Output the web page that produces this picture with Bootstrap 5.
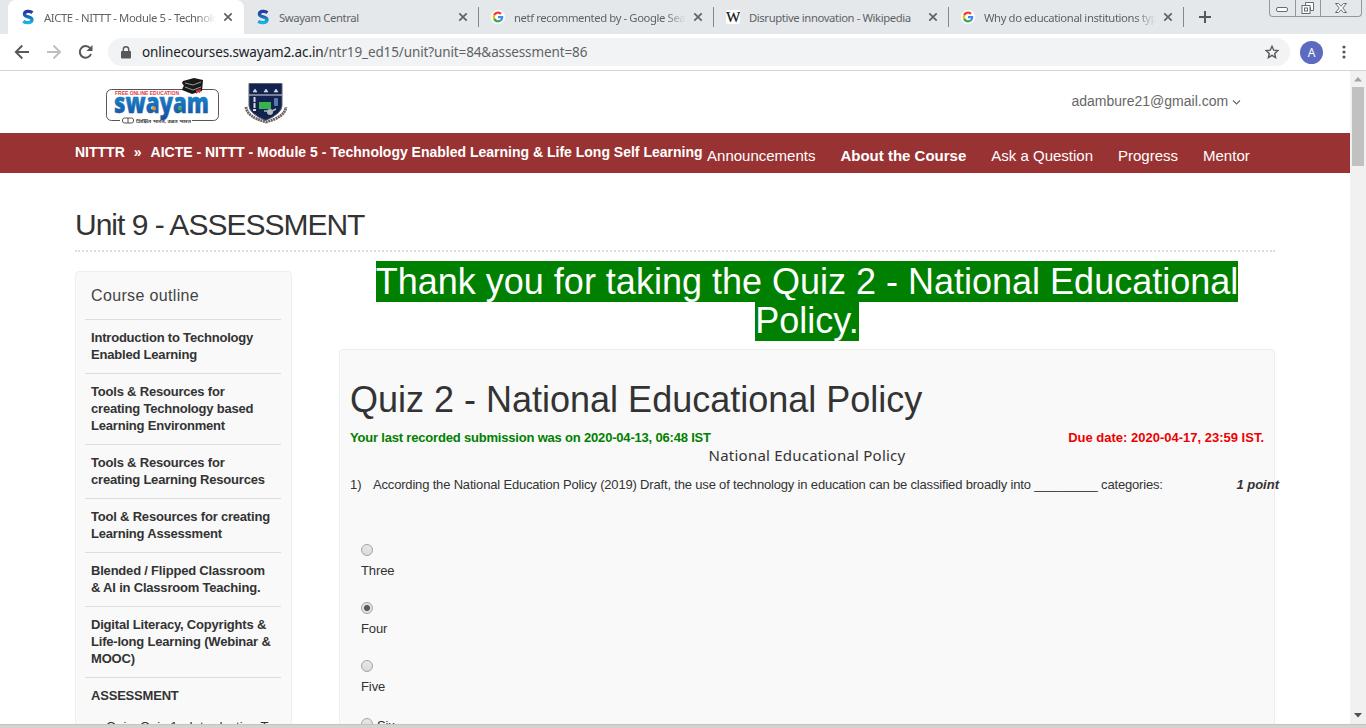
<!DOCTYPE html>
<html lang="en">
<head>
<meta charset="utf-8">
<meta name="viewport" content="width=device-width, initial-scale=1">
<title>AICTE - NITTT - Module 5</title>
<link rel="stylesheet" href="https://cdn.jsdelivr.net/npm/bootstrap@5.3.0/dist/css/bootstrap.min.css">
<style>
body{width:1366px;height:728px;font-family:"Liberation Sans",Arial,sans-serif;font-size:13px;line-height:17px;color:#333}
.chrome{font-family:"Noto Sans",Tahoma,sans-serif;color:#5f6368}
.tabstrip{height:34px;background:#e5e8eb;padding-left:8px}
.tab{width:235px;height:34px;padding:0 11px 0 12px;font-size:11.3px;letter-spacing:-.4px}
.tab.active-tab{width:236px;padding-left:13px;padding-right:11px;background:#fff;border-radius:8px 8px 0 0}
.tab .divider{width:1px;height:20px;background:#85888b;margin-left:10px;margin-right:-11px}
.tab-title{width:172px;margin-left:9px;overflow:hidden;white-space:nowrap}
.fade-end{-webkit-mask-image:linear-gradient(90deg,#000 88%,transparent)}
.favicon{width:14px;height:16px;flex:none}
.wctl{height:17px;width:93px;margin-left:57px;border:1px solid #94979b;border-top:0;border-radius:0 0 4px 4px}
.wctl>span+span{border-left:1px solid #94979b}
.toolbar{height:36px}
.omnibox{height:28px;width:1182px;border-radius:14px;background:#f1f3f4;font-size:13.5px;letter-spacing:-.12px;margin-left:14px}
.avatar{width:23px;height:23px;background:#5c6bc0;font-size:12px}
.view{height:654px;border-top:1px solid #d4d6d8}
.page{width:1350px}
.scroller{width:16px;background:#f1f1f1}
.thumb{width:12px;height:79px;background:#c1c1c1}
.brandbar{height:62px;padding:7px 109px 0 105px}
.mail{font-size:14px;color:#666}
.coursebar{height:40px;background:#993333;padding-left:75px;color:#fff}
.crumbs{font-size:14px;font-weight:700;line-height:38px;white-space:nowrap}
.menu{font-size:15px;line-height:45px;white-space:nowrap}
.unit{font-size:30px;line-height:40px;letter-spacing:-1px;margin:0 75px;padding-top:32px;height:79px;border-bottom:2px dotted #ddd;font-weight:400}
.body-row{padding:19px 75px 0;}
.panel{background:#f9f9f9;border:1px solid #eee;border-radius:4px}
.outline{width:217px;height:600px;padding:0 10px 0 9px}
.outline .head{font-size:16px;letter-spacing:.35px;height:47px;padding:14px 0 0 6px;line-height:20px;color:#444}
.outline .unit-item{border-top:1px solid #ddd;padding:9px 6px 10px;font-weight:700;white-space:nowrap;letter-spacing:-.2px}
.quiz-col{width:936px;margin-left:47px;margin-top:-9px}
.thanks{font-size:36px;line-height:39px;color:#fff;font-weight:400;margin:0 0 9px;white-space:nowrap}
.thanks span{background:#008000}
.quiz{height:600px;padding:30px 10px 0}
.quiz h1{font-size:36px;line-height:40px;font-weight:400;margin:0 0 9px}
.submitted{letter-spacing:-.19px}
.question{letter-spacing:-.175px;white-space:nowrap}
.topic{font-family:"Noto Sans",sans-serif;font-size:15px;line-height:18px;letter-spacing:.23px}
.opt{padding-left:11px;height:58px;letter-spacing:-.1px}
.dot{width:12px;height:12px;border:1px solid #a5a5a5;border-radius:50%;background:linear-gradient(#e8e8e8,#dadada);display:block;margin-bottom:6px}
.dot.on{background:radial-gradient(circle,#5a5a5a 0 2.7px,#e2e2e2 3.3px)}
.frame-end{height:4px;background:#d6d3ce;border-top:1px solid #c4c4c4}
</style>
</head>
<body class="overflow-hidden bg-white">
<svg width="0" height="0" class="position-absolute">
<defs>
<linearGradient id="sg" x1="0" y1="0" x2="0" y2="1"><stop offset="0" stop-color="#2638a0"/><stop offset=".5" stop-color="#1770bd"/><stop offset="1" stop-color="#15b4e4"/></linearGradient>
<linearGradient id="wg" x1="0" y1="0" x2="0" y2="1"><stop offset="0" stop-color="#1ba0e0"/><stop offset="1" stop-color="#174a9c"/></linearGradient>
<symbol id="fs" viewBox="0 0 14 16"><path d="M11.5 3.6C8.500 1.500 3.400 2 3.400 5.200c0 3.300 7.600 1.900 7.600 5.500 0 3.400-5.500 3.800-8.800 1.600" fill="none" stroke="url(#sg)" stroke-width="3.300"/></symbol>
<symbol id="fg" viewBox="0 0 48 48"><circle cx="24" cy="24" r="24" fill="#fff"/><path fill="#EA4335" d="M24 13c2.900 0 5.400 1 7.400 2.900l5.500-5.500C33.500 7.300 29.100 5.500 24 5.500c-7.300 0-13.500 4.100-16.500 10.200l6.500 5C15.500 16.200 19.400 13 24 13z"/><path fill="#4285F4" d="M42 24.400c0-1.300-.1-2.600-.3-3.900H24V28h10.100c-.4 2.300-1.800 4.300-3.800 5.600l6.200 4.800c3.500-3.300 5.500-8.200 5.500-14z"/><path fill="#FBBC05" d="M14 27.300a11 11 0 0 1 0-6.600l-6.500-5a18.500 18.500 0 0 0 0 16.600z"/><path fill="#34A853" d="M24 42.500c5 0 9.200-1.600 12.400-4.500l-6.100-4.700A11.600 11.600 0 0 1 14 27.300l-6.500 5c3 6.100 9.200 10.200 16.500 10.200z"/></symbol>
<symbol id="x" viewBox="0 0 10 10"><path d="M1.300 1.300l7.400 7.400M8.700 1.300L1.300 8.700" stroke="#5f6368" stroke-width="1.700"/></symbol>
</defs>
</svg>
<div class="chrome">
 <div class="tabstrip d-flex">
  <div class="tab active-tab d-flex align-items-center"><svg class="favicon"><use href="#fs"/></svg><span class="tab-title fade-end">AICTE - NITTT - Module 5 - Technology</span><svg class="ms-auto flex-shrink-0" width="10" height="10"><use href="#x"/></svg></div>
  <div class="tab d-flex align-items-center"><svg class="favicon"><use href="#fs"/></svg><span class="tab-title">Swayam Central</span><svg class="ms-auto flex-shrink-0" width="10" height="10"><use href="#x"/></svg><i class="divider"></i></div>
  <div class="tab d-flex align-items-center"><svg class="favicon" width="14" height="16"><use href="#fg"/></svg><span class="tab-title fade-end">netf recommented by - Google Search</span><svg class="ms-auto flex-shrink-0" width="10" height="10"><use href="#x"/></svg><i class="divider"></i></div>
  <div class="tab d-flex align-items-center"><svg class="favicon" viewBox="0 0 14 16"><rect y="1" width="14" height="14" rx="2" fill="#fff"/><text x="0" y="12.500" font-family="Liberation Serif,serif" font-size="14" fill="#111" stroke="#111" stroke-width=".2" textLength="14" lengthAdjust="spacingAndGlyphs">W</text></svg><span class="tab-title">Disruptive innovation - Wikipedia</span><svg class="ms-auto flex-shrink-0" width="10" height="10"><use href="#x"/></svg><i class="divider"></i></div>
  <div class="tab d-flex align-items-center"><svg class="favicon"><use href="#fg"/></svg><span class="tab-title fade-end">Why do educational institutions typically</span><svg class="ms-auto flex-shrink-0" width="10" height="10"><use href="#x"/></svg><i class="divider"></i></div>
  <svg class="align-self-center" width="14" height="14" style="margin-left:14px"><path d="M7 1v12M1 7h12" stroke="#55585c" stroke-width="2"/></svg>
  <div class="wctl d-flex">
   <span class="d-flex align-items-end justify-content-center pb-1" style="width:25px"><svg width="13" height="5"><rect x=".5" y=".5" width="11" height="4" rx="1.500" fill="#fff" stroke="#666b75"/></svg></span>
   <span class="d-flex justify-content-center" style="width:25px;padding-top:2px"><svg width="14" height="13"><path d="M4.500.5h8v8h-3v-3h-5z" fill="#fff" stroke="#666b75"/><rect x="1" y="3.500" width="8" height="8" fill="#fff" stroke="#666b75"/><rect x="3.500" y="6" width="3" height="3" fill="none" stroke="#666b75"/></svg></span>
   <span class="d-flex justify-content-center flex-fill" style="padding-top:3px"><svg width="12" height="10"><path d="M.5.5h3L6 3.300 8.500.5h3L7.800 5l3.700 4.500h-3L6 6.700 3.500 9.500h-3L4.200 5z" fill="#fff" stroke="#666b75"/></svg></span>
  </div>
 </div>
 <div class="toolbar d-flex align-items-center">
  <svg width="80" height="18" style="margin-left:14px" fill="none" stroke-width="1.900"><path d="M15 9H2M8.300 2.500L1.800 9l6.500 6.500" stroke="#55585c"/><path d="M33 9h13M39.500 2.500L46 9l-6.500 6.500" stroke="#bcbec0"/><path d="M77 11a5.800 5.800 0 1 1-.9-5.800" stroke="#55585c" stroke-width="2"/><path d="M78.500 2v6h-6z" fill="#55585c"/></svg>
  <div class="omnibox d-flex align-items-center">
   <svg width="10" height="13" style="margin-left:13px"><rect y="5" width="10" height="7.500" rx="1" fill="#55585c"/><path d="M2.300 6V3.500a2.700 2.700 0 0 1 5.400 0V6" fill="none" stroke="#55585c" stroke-width="1.400"/></svg>
   <span class="url" style="margin-left:11px"><span style="color:#202124">onlinecourses.swayam2.ac.in</span>/ntr19_ed15/unit?unit=84&amp;assessment=86</span>
   <svg class="ms-auto" style="margin-right:11px" width="14" height="14" viewBox="0 0 14 14"><path d="M7 1.300l1.700 3.900 4.200.4-3.200 2.800.9 4.200L7 10.400l-3.600 2.200.9-4.200L1.100 5.600l4.200-.4z" fill="none" stroke="#55585c" stroke-width="1.400"/></svg>
  </div>
  <div class="avatar rounded-circle d-flex align-items-center justify-content-center text-white" style="margin-left:10px">A</div>
  <svg width="4" height="14" style="margin-left:19px" fill="#55585c"><circle cx="2" cy="2" r="1.600"/><circle cx="2" cy="7" r="1.600"/><circle cx="2" cy="12" r="1.600"/></svg>
 </div>
</div>
<div class="view d-flex overflow-hidden">
 <main class="page overflow-hidden">
  <header class="brandbar d-flex">
   <svg width="114" height="48" viewBox="0 0 114 48"><rect x="1.500" y="11.500" width="112" height="31" rx="5" fill="#fff" stroke="#555"/><rect x="15" y="39" width="72" height="7" fill="#fff"/>
    <text x="10" y="16.500" font-size="5.500" font-weight="700" fill="#e23b3b" textLength="64" lengthAdjust="spacingAndGlyphs">FREE ONLINE EDUCATION</text>
    <text x="9" y="35" font-family="Open Sans,sans-serif" font-size="29" font-weight="800" fill="url(#wg)" stroke="url(#wg)" stroke-width=".5" textLength="95" lengthAdjust="spacingAndGlyphs">swayam</text><circle cx="49" cy="30.500" r="2" fill="#ee8b28"/><circle cx="75" cy="30.500" r="2" fill="#42a84c"/>
    <rect x="17.500" y="40" width="11" height="5" rx="2" fill="#fff" stroke="#555"/><path d="M23 40v5" stroke="#555"/><text x="31" y="45" font-family="Noto Sans,sans-serif" font-size="5" font-weight="700" fill="#444" textLength="55" lengthAdjust="spacingAndGlyphs">शिक्षित भारत, उन्नत भारत</text>
    <path d="M78 3l11-3 9 2-1 11-10 3-10-4 1-3 1-1-2-3z" fill="#191919"/><path d="M80 5l8 2 8-3M80 9l8 3 8-3" stroke="#bbb" fill="none" stroke-width=".8"/><path d="M91 12l5-1-1 4-2-1-2 2z" fill="#c33"/></svg>
   <svg width="44" height="46" viewBox="0 0 44 46" style="margin-left:25px"><path d="M2 29q1 10 20 15Q41 39 42 29" fill="none" stroke="#6d6263" stroke-width="2.800" stroke-dasharray="2 .6"/><path d="M5 5.500h33v22q0 8-16.500 15Q5 35.500 5 27.500z" fill="#14234e" stroke="#5d6170"/><path d="M5 17h33" stroke="#d8dbe5"/><path d="M9 14l2-3 2 3zm11 0l2-3 2 3zm10 0l2-3 2 3z" fill="#d8dbe5" stroke="#d8dbe5" stroke-width=".6"/><rect x="15" y="24" width="12" height="7" fill="#36b34d"/><path d="M10.500 19v13M9 32h3" stroke="#d8dbe5" stroke-width="2" stroke-dasharray="5 1"/><rect x="30" y="20" width="4" height="8" rx="1" fill="#567ab0"/><circle cx="26" cy="34" r="3" fill="#b6bac5"/><path d="M20 33h4M28 33l4-2" stroke="#b6bac5" stroke-width="1.500"/></svg>
   <div class="mail ms-auto align-self-center" style="margin-top:-8px">adambure21@gmail.com <svg width="9" height="7" viewBox="0 0 9 7"><path d="M1 1.500L4.500 5 8 1.500" fill="none" stroke="#666" stroke-width="1.100"/></svg></div>
  </header>
  <nav class="coursebar d-flex">
   <div class="crumbs"><span>NITTTR</span><span style="margin:0 9px">»</span><span class="course">AICTE - NITTT - Module 5 - Technology Enabled Learning &amp; Life Long Self Learning</span></div>
   <div class="menu d-flex" style="margin-left:4.500px;gap:25px"><span>Announcements</span><b>About the Course</b><span>Ask a Question</span><span>Progress</span><span>Mentor</span></div>
  </nav>
  <h2 class="unit">Unit 9 - ASSESSMENT</h2>
  <div class="body-row d-flex align-items-start">
   <aside class="outline panel flex-shrink-0">
    <div class="head">Course outline</div>
    <div class="unit-item">Introduction to Technology<br>Enabled Learning</div>
    <div class="unit-item">Tools &amp; Resources for<br>creating Technology based<br>Learning Environment</div>
    <div class="unit-item">Tools &amp; Resources for<br>creating Learning Resources</div>
    <div class="unit-item">Tool &amp; Resources for creating<br>Learning Assessment</div>
    <div class="unit-item">Blended / Flipped Classroom<br>&amp; AI in Classroom Teaching.</div>
    <div class="unit-item">Digital Literacy, Copyrights &amp;<br>Life-long Learning (Webinar &amp;<br>MOOC)</div>
    <div class="unit-item">ASSESSMENT</div>
    <div class="text-nowrap" style="padding:4px 0 0 12px"><span style="font-size:9px">○</span> Quiz: Quiz 1 - Introduction To</div>
   </aside>
   <section class="quiz-col flex-shrink-0">
    <h1 class="thanks text-center"><span>Thank you for taking the Quiz 2 - National Educational<br>Policy.</span></h1>
    <div class="quiz panel">
     <h1>Quiz 2 - National Educational Policy</h1>
     <div class="d-flex justify-content-between fw-bold"><span class="submitted" style="color:#008000">Your last recorded submission was on 2020-04-13, 06:48 IST</span><span style="color:#e00">Due date: 2020-04-17, 23:59 IST.</span></div>
     <div class="topic text-center">National Educational Policy</div>
     <div class="d-flex" style="margin:12px -15px 51px 0"><span style="width:23px">1)</span><span class="question">According the National Education Policy (2019) Draft, the use of technology in education can be classified broadly into _________ categories:</span><b class="ms-auto fst-italic">1 point</b></div>
     <div class="opt"><i class="dot"></i>Three</div>
     <div class="opt"><i class="dot on"></i>Four</div>
     <div class="opt"><i class="dot"></i>Five</div>
     <div class="opt d-flex"><i class="dot me-1"></i><span style="margin-top:-1px">Six</span></div>
    </div>
   </section>
  </div>
 </main>
 <div class="scroller d-flex flex-column align-items-center">
  <svg width="8" height="5" style="margin-top:6px"><path d="M0 4.500L4 0l4 4.500z" fill="#a3a3a3"/></svg>
  <div class="thumb" style="margin-top:5px"></div>
  <svg class="mt-auto" width="8" height="5" style="margin-bottom:6px"><path d="M0 0h8L4 4.500z" fill="#505050"/></svg>
 </div>
</div>
<div class="frame-end"></div>
<script src="https://cdn.jsdelivr.net/npm/bootstrap@5.3.0/dist/js/bootstrap.bundle.min.js"></script>
</body>
</html>
